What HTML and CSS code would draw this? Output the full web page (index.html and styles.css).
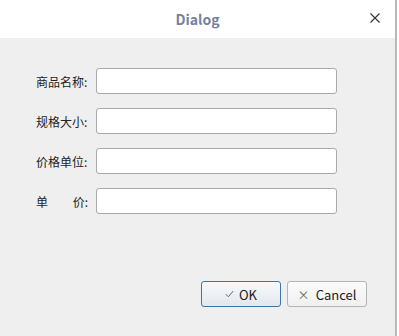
FILE: index.html
```html
<!DOCTYPE html>
<html>
<head>
<meta charset="utf-8">
<link rel="stylesheet" href="styles.css">
</head>
<body>
<div class="window">
  <div class="titlebar">
    <span class="title">Dialog</span>
    <span class="close">
      <svg width="10" height="10" viewBox="0 0 10 10"><path d="M0.5 0.5 L9.5 9.5 M9.5 0.5 L0.5 9.5" stroke="#333" stroke-width="1.1" fill="none"/></svg>
    </span>
  </div>
  <div class="content">
    <div class="form">
      <div class="row"><label class="lbl">商品名称:</label><input class="field" type="text"></div>
      <div class="row"><label class="lbl">规格大小:</label><input class="field" type="text"></div>
      <div class="row"><label class="lbl">价格单位:</label><input class="field" type="text"></div>
      <div class="row"><label class="lbl lbl-split"><span>单</span><span>价:</span></label><input class="field" type="text"></div>
    </div>
    <div class="buttons">
      <button class="btn btn-ok"><svg class="chk" width="9" height="8" viewBox="0 0 9 8"><path d="M0.8 4.2 L3.3 6.8 L8.3 1" stroke="#666" stroke-width="1" fill="none"/></svg>OK</button>
      <button class="btn btn-cancel"><span class="ico-x">×</span>Cancel</button>
    </div>
  </div>
</div>
</body>
</html>
```
FILE: styles.css
```css
html, body {
  margin: 0;
  padding: 0;
  background: #ffffff;
}
body {
  width: 399px;
  height: 336px;
  overflow: hidden;
  font-family: "Noto Sans CJK SC", "Noto Sans", sans-serif;
}
.window {
  width: 395px;
  height: 336px;
  border-right: 2px solid #b9b9b9;
  display: flex;
  flex-direction: column;
  background: #efefef;
}
.titlebar {
  height: 38px;
  background: #ffffff;
  position: relative;
  display: flex;
  align-items: center;
  justify-content: center;
  flex-shrink: 0;
}
.title {
  font-weight: bold;
  font-size: 14px;
  color: #73829f;
}
.close {
  position: absolute;
  right: 15px;
  top: 13px;
  width: 10px;
  height: 10px;
  display: block;
}
.close svg { display: block; }
.content {
  flex: 1;
  display: flex;
  flex-direction: column;
  padding: 30px 28px 0 36px;
}
.form {
  display: flex;
  flex-direction: column;
  gap: 14px;
}
.row {
  display: flex;
  align-items: center;
  height: 26px;
  gap: 8px;
}
.lbl {
  width: 52px;
  font-size: 12px;
  color: #222;
  white-space: nowrap;
}
.lbl-split {
  display: flex;
  justify-content: space-between;
}
.field {
  box-sizing: border-box;
  width: 241px;
  height: 26px;
  margin: 0;
  border: 1px solid #a9a9a9;
  border-radius: 3px;
  background: #fff;
  outline: none;
}
.buttons {
  margin-top: 67px;
  display: flex;
  justify-content: flex-end;
  gap: 6px;
}
.btn {
  box-sizing: border-box;
  height: 26px;
  width: 80px;
  border-radius: 3px;
  font-family: "Noto Sans CJK SC", "Noto Sans", sans-serif;
  font-size: 13px;
  color: #1a1a1a;
  display: flex;
  align-items: center;
  justify-content: center;
  padding: 0;
  margin: 0;
}
.btn-ok {
  border: 1px solid #3b77a6;
  background: linear-gradient(#f8f9fb, #e3e7ec);
}
.btn-cancel {
  border: 1px solid #b4b4b4;
  background: linear-gradient(#fbfbfb, #f0f0f0);
}
.chk {
  margin-right: 5px;
  display: block;
}
.ico-x {
  color: #666;
  font-size: 12px;
  margin-right: 6px;
}
```
